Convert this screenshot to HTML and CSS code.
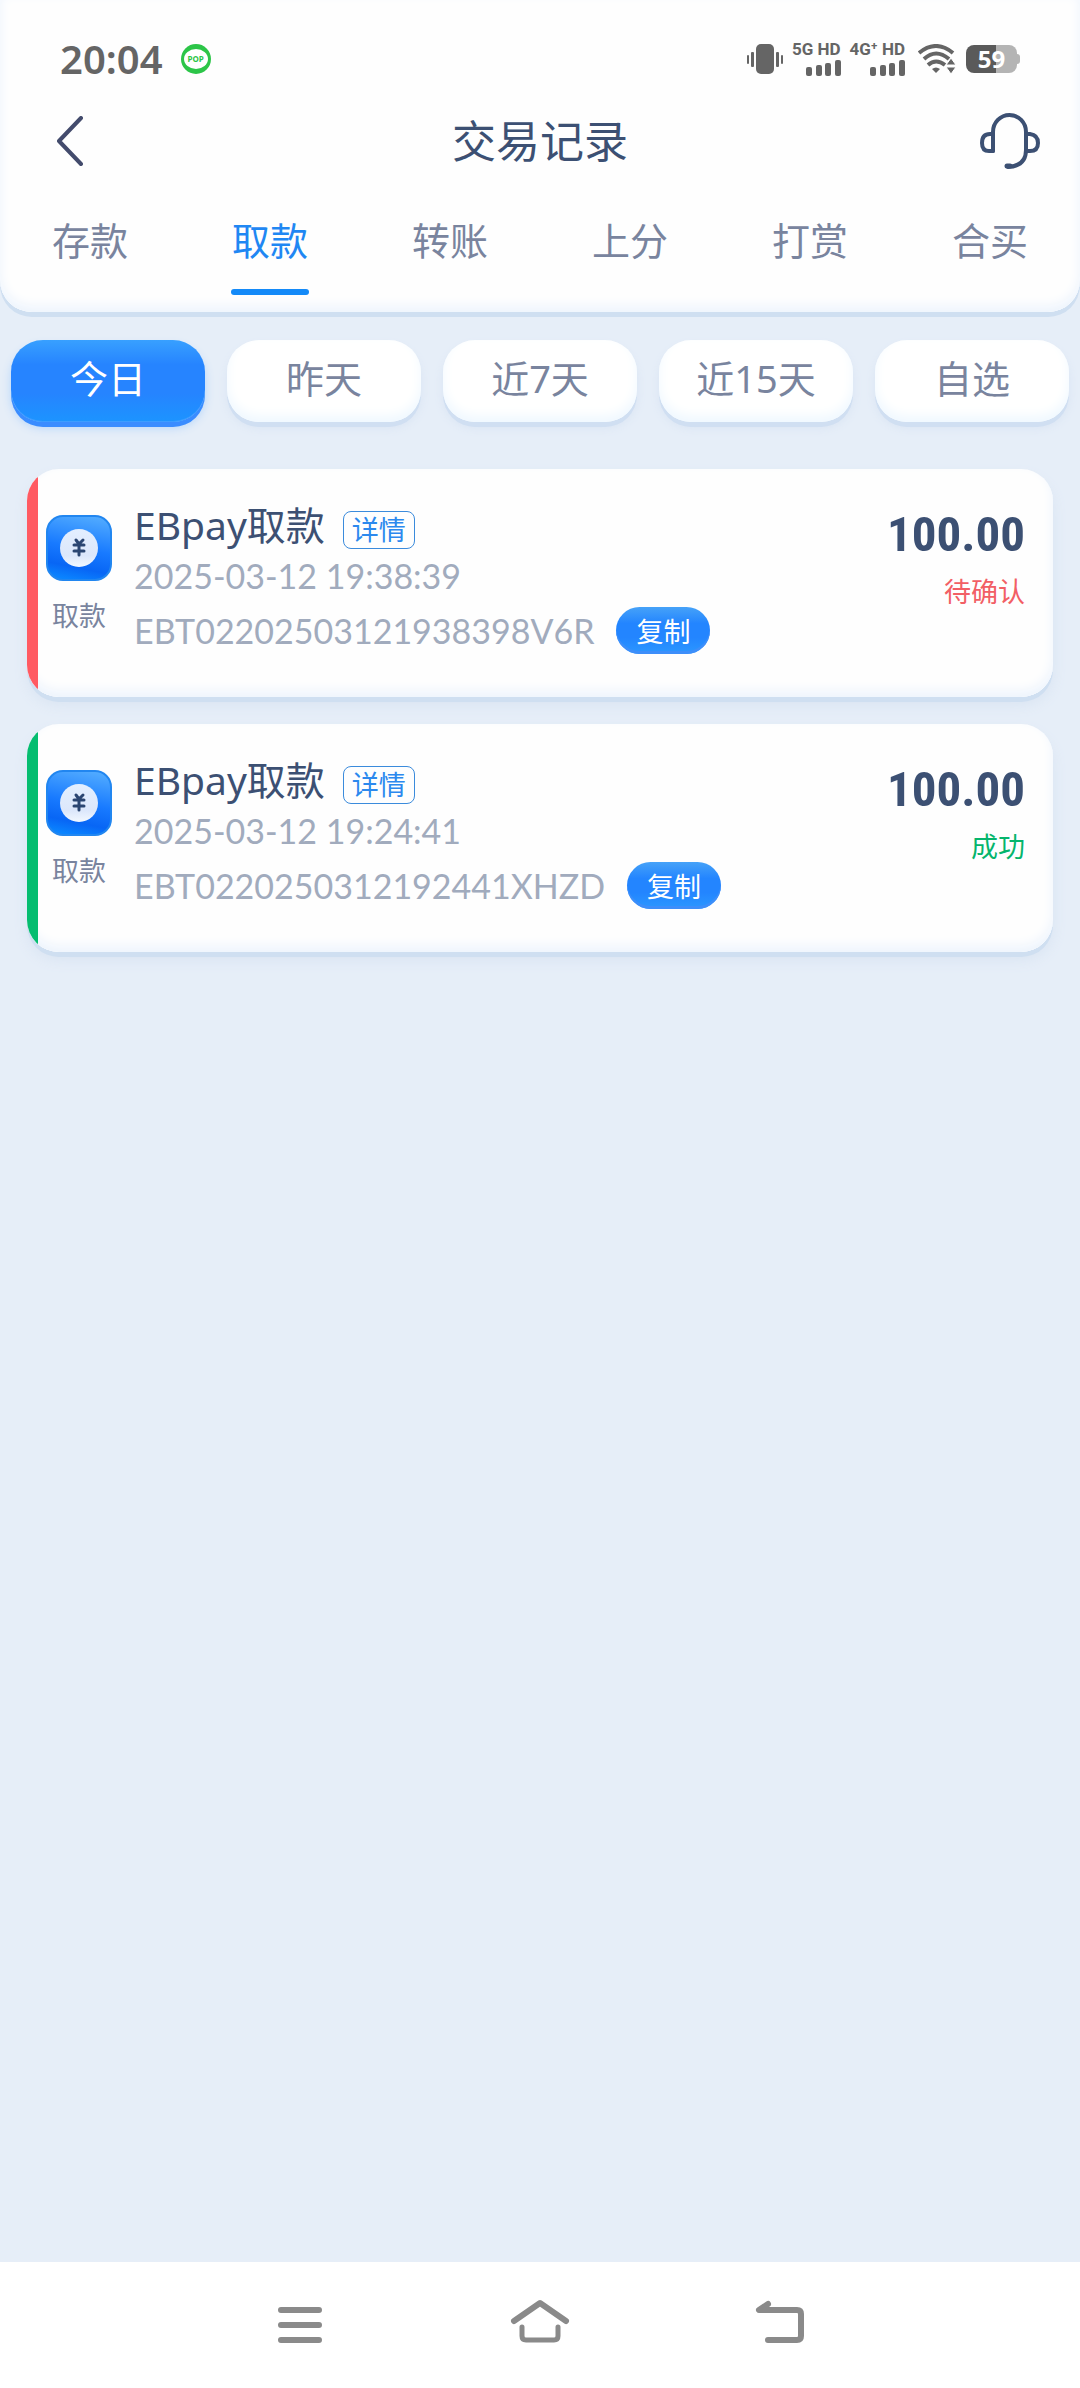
FILE: index.html
```html
<!DOCTYPE html>
<html lang="zh-CN">
<head>
  <meta charset="UTF-8">
  <meta name="viewport" content="width=device-width, initial-scale=1">
  <title>交易记录</title>
  <link rel="stylesheet" href="styles.css">
</head>
<body>
<header class="header">
  <div class="status-bar">
    <span class="time">20:04</span>
    <span class="pop-badge"><span class="pop-bubble">POP</span></span>
    <div class="status-icons">
      <svg class="vibrate" width="36" height="30" viewBox="0 0 36 30" fill="#656565">
        <rect x="9" y="0" width="18" height="30" rx="5"/>
        <rect x="0" y="11" width="2" height="9" rx="1"/>
        <rect x="4" y="8" width="3" height="15" rx="1"/>
        <rect x="29" y="8" width="3" height="15" rx="1"/>
        <rect x="34" y="11" width="2" height="9" rx="1"/>
      </svg>
      <div class="signal">
        <span>5G HD</span>
        <svg width="35" height="16" viewBox="0 0 35 16" fill="#656565">
          <rect x="0" y="7" width="6" height="9" rx="2"/>
          <rect x="10" y="5" width="6" height="11" rx="2"/>
          <rect x="19" y="3" width="6" height="13" rx="2"/>
          <rect x="29" y="0" width="6" height="16" rx="2"/>
        </svg>
      </div>
      <div class="signal">
        <span>4G⁺ HD</span>
        <svg width="35" height="16" viewBox="0 0 35 16" fill="#656565">
          <rect x="0" y="7" width="6" height="9" rx="2"/>
          <rect x="10" y="5" width="6" height="11" rx="2"/>
          <rect x="19" y="3" width="6" height="13" rx="2"/>
          <rect x="29" y="0" width="6" height="16" rx="2"/>
        </svg>
      </div>
      <svg class="wifi" width="38" height="30" viewBox="0 0 38 30">
        <g fill="none" stroke="#656565" stroke-width="4">
          <path d="M1 9Q18 -5 35 9"/>
          <path d="M6 15Q18 4 31 15"/>
          <path d="M10 21Q18 14 27 21"/>
        </g>
        <path d="M14 25Q18 22 22 25L18 29Z" fill="#656565"/>
        <path d="M33 14L38 21H28ZM33 30L28 23H38Z" fill="#656565" stroke="#fff" stroke-width="1"/>
      </svg>
      <div class="battery"><span>59</span></div>
    </div>
  </div>

  <div class="nav-bar">
    <button class="icon-btn" aria-label="返回">
      <svg width="28" height="50" viewBox="0 0 28 50" fill="none" stroke="#434b6c" stroke-width="4" stroke-linecap="round" stroke-linejoin="round">
        <path d="M25 2L3 25L25 48"/>
      </svg>
    </button>
    <h1>交易记录</h1>
    <button class="icon-btn" aria-label="客服">
      <svg width="60" height="56" viewBox="0 0 60 56" fill="none" stroke="#3c5073" stroke-width="4" stroke-linecap="round" stroke-linejoin="round">
        <path d="M13 38V19A16.500 17 0 0 1 46 19V37Q46 53 28 54"/>
        <path d="M13 21H10Q2 21 2 30Q2 38 9 38H13M46 21H50Q58 22 58 30Q58 38 50 38H46"/>
        <path d="M27 53H30" stroke-width="5"/>
      </svg>
    </button>
  </div>

  <nav class="tabs">
    <a href="#">存款</a>
    <a href="#" class="active">取款</a>
    <a href="#">转账</a>
    <a href="#">上分</a>
    <a href="#">打赏</a>
    <a href="#">合买</a>
  </nav>
</header>

<main>
  <div class="filters">
    <button class="filter active">今日</button>
    <button class="filter">昨天</button>
    <button class="filter">近7天</button>
    <button class="filter">近15天</button>
    <button class="filter">自选</button>
  </div>

  <div class="records">
    <article class="record pending">
      <div class="record-type">
        <svg width="66" height="66" viewBox="0 0 66 66">
          <defs>
            <linearGradient id="iconBg" x1="0.600" y1="0" x2="0.400" y2="1">
              <stop offset="0" stop-color="#4fa9ff"/>
              <stop offset="0.500" stop-color="#187aff"/>
              <stop offset="0.800" stop-color="#0866f5"/>
              <stop offset="1" stop-color="#0a84ff"/>
            </linearGradient>
            <linearGradient id="coin" x1="0" y1="0" x2="0" y2="1">
              <stop offset="0" stop-color="#e3efff"/>
              <stop offset="0.700" stop-color="#dce7fb"/>
              <stop offset="1" stop-color="#f2f8ff"/>
            </linearGradient>
          </defs>
          <rect x="1" y="1" width="64" height="64" rx="16" fill="url(#iconBg)" stroke="#2186f0" stroke-width="2"/>
          <circle cx="33" cy="33" r="19" fill="url(#coin)"/>
          <path d="M30 25L33 29L37 25M28 30H38M28 36H38M33 30V40" fill="none" stroke="#2b4672" stroke-width="3" stroke-linecap="round" stroke-linejoin="round"/>
        </svg>
        <span>取款</span>
      </div>
      <div class="record-info">
        <div class="record-title">
          <h2>EBpay取款</h2>
          <a href="#" class="detail">详情</a>
        </div>
        <time>2025-03-12 19:38:39</time>
        <div class="record-id">
          <span>EBT02202503121938398V6R</span>
          <button class="copy">复制</button>
        </div>
      </div>
      <div class="record-amount">
        <strong>100.00</strong>
        <span class="state">待确认</span>
      </div>
    </article>

    <article class="record success">
      <div class="record-type">
        <svg width="66" height="66" viewBox="0 0 66 66">
          <rect x="1" y="1" width="64" height="64" rx="16" fill="url(#iconBg)" stroke="#2186f0" stroke-width="2"/>
          <circle cx="33" cy="33" r="19" fill="url(#coin)"/>
          <path d="M30 25L33 29L37 25M28 30H38M28 36H38M33 30V40" fill="none" stroke="#2b4672" stroke-width="3" stroke-linecap="round" stroke-linejoin="round"/>
        </svg>
        <span>取款</span>
      </div>
      <div class="record-info">
        <div class="record-title">
          <h2>EBpay取款</h2>
          <a href="#" class="detail">详情</a>
        </div>
        <time>2025-03-12 19:24:41</time>
        <div class="record-id">
          <span>EBT0220250312192441XHZD</span>
          <button class="copy">复制</button>
        </div>
      </div>
      <div class="record-amount">
        <strong>100.00</strong>
        <span class="state">成功</span>
      </div>
    </article>
  </div>
</main>

<footer class="system-nav">
  <button aria-label="菜单">
    <svg width="60" height="44" viewBox="0 0 60 44" fill="none" stroke="#8a8a8a" stroke-width="6" stroke-linecap="round">
      <path d="M11 11H49M11 26H49M11 41H49"/>
    </svg>
  </button>
  <button aria-label="主页">
    <svg width="60" height="44" viewBox="0 0 60 44" fill="none" stroke="#8a8a8a" stroke-width="6" stroke-linecap="round" stroke-linejoin="round">
      <path d="M4 22L30 4L56 22"/>
      <path d="M12 28V37Q12 41 16 41H44Q48 41 48 37V28" stroke-width="5"/>
    </svg>
  </button>
  <button aria-label="后退">
    <svg width="60" height="44" viewBox="0 0 60 44" fill="none" stroke="#8a8a8a" stroke-width="6" stroke-linecap="round" stroke-linejoin="round">
      <path d="M18 5L9 11H47Q51 11 51 15V37Q51 41 47 41H18"/>
    </svg>
  </button>
</footer>
</body>
</html>
```

FILE: styles.css
```css
* {
  box-sizing: border-box;
}

body {
  margin: 0;
  min-height: 100vh;
  display: flex;
  flex-direction: column;
  background-color: #e6eef8;
  font-family: "Noto Sans", "Noto Sans CJK SC", sans-serif;
  font-size: 38px;
  color: #3c5073;
}

button {
  border: none;
  padding: 0;
  background: none;
  font-family: inherit;
  cursor: pointer;
}

a {
  color: inherit;
  text-decoration: none;
}

svg {
  display: block;
}

/* header */
.header {
  background-color: #fefefe;
  border-radius: 0 0 32px 32px;
  box-shadow: inset 0 -6px 12px #edf4fd, inset 0 -1px 0 #ffffff, 0 5px 0 #cfdff1;
}

.status-bar {
  display: flex;
  align-items: center;
  padding: 39px 60px 0;
  height: 79px;
  color: #656565;
}

.time {
  font-size: 40px;
  line-height: 40px;
  font-weight: 600;
}

.pop-badge {
  display: flex;
  align-items: center;
  justify-content: center;
  width: 30px;
  height: 30px;
  margin-left: 18px;
  border-radius: 50%;
  background-color: #2cc548;
}

.pop-bubble {
  width: 24px;
  height: 20px;
  border-radius: 50%;
  background-color: #ffffff;
  color: #2cc548;
  font-size: 8px;
  line-height: 20px;
  font-weight: 700;
  text-align: center;
}

.status-icons {
  display: flex;
  align-items: center;
  margin-left: auto;
}

.signal {
  display: flex;
  flex-direction: column;
  align-items: flex-end;
  gap: 3px;
  margin-left: 9px;
  font-family: Roboto, sans-serif;
  font-size: 17px;
  line-height: 15px;
  font-weight: 700;
}

.wifi {
  margin-left: 13px;
}

.battery {
  position: relative;
  width: 51px;
  height: 28px;
  margin: 0 3px 0 10px;
  border-radius: 8px;
  background: linear-gradient(90deg, #5a5a5a 59%, #b4b4b4 59%);
  color: #ffffff;
  font-size: 24px;
  line-height: 28px;
  font-weight: 700;
  text-align: center;
}

.battery::after {
  content: "";
  position: absolute;
  left: 100%;
  top: 9px;
  width: 3px;
  height: 10px;
  border-radius: 0 3px 3px 0;
  background-color: #b4b4b4;
}

.nav-bar {
  display: flex;
  align-items: center;
  justify-content: space-between;
  height: 124px;
  padding: 0 40px 0 56px;
}

.icon-btn {
  display: flex;
  width: 60px;
}

.nav-bar h1 {
  margin: 0 16px 0 0;
  font-size: 44px;
  line-height: 60px;
  font-weight: 400;
}

.tabs {
  display: grid;
  grid-template-columns: repeat(6, 1fr);
}

.tabs a {
  display: flex;
  flex-direction: column;
  align-items: center;
  gap: 29px;
  padding: 17px 0;
  line-height: 40px;
  color: #79849e;
}

.tabs a::after {
  content: "";
  width: 78px;
  height: 6px;
  border-radius: 3px;
}

.tabs a.active {
  color: #1f87f3;
}

.tabs a.active::after {
  background-color: #148af8;
}

/* filters */
main {
  flex: 1;
}

.filters {
  display: grid;
  grid-template-columns: repeat(5, 1fr);
  gap: 22px;
  padding: 28px 11px 0;
}

.filter {
  height: 82px;
  padding-bottom: 7px;
  border-radius: 32px;
  background-color: #ffffff;
  box-shadow: inset 0 -6px 12px #eff8ff, 0 5px 0 #d0dff2, 0 6px 10px #d9e4f3;
  color: #79849e;
  font-size: 38px;
  line-height: 40px;
}

.filter.active {
  background: linear-gradient(#38a0ff, #2684ff 30%, #2684ff 65%, #1c94ff);
  box-shadow: inset 0 -1px 0 #3d9cff, 0 5px 0 #3a8cff, 0 6px 10px #b5d5fa;
  color: #ffffff;
}

/* records */
.records {
  display: flex;
  flex-direction: column;
  gap: 27px;
  padding: 47px 27px;
}

.record {
  display: flex;
  align-items: flex-start;
  min-height: 228px;
  padding-right: 28px;
  border-radius: 32px;
  background-color: #fefefe;
  box-shadow: inset 0 -6px 12px #edf4fd, inset 0 -1px 0 #ffffff, 0 5px 0 #cfdff1, 0 8px 14px #d9e4f2;
  overflow: hidden;
}

.record::before {
  content: "";
  align-self: stretch;
  width: 11px;
}

.pending::before {
  background-color: #ff5a62;
}

.success::before {
  background-color: #05bd70;
}

.record-type {
  display: flex;
  flex-direction: column;
  align-items: center;
  gap: 17px;
  padding: 46px 22px 0 8px;
  color: #79849e;
  font-size: 27px;
  line-height: 36px;
}

.record-info {
  flex: 1;
  padding-top: 32px;
}

.record-title {
  display: flex;
  align-items: flex-end;
  gap: 18px;
}

.record-title h2 {
  margin: 0;
  font-size: 39px;
  line-height: 48px;
  font-weight: 400;
}

.detail {
  padding: 0 8px;
  border: 1px solid #3b8bdc;
  border-radius: 8px;
  color: #2c89ee;
  font-size: 27px;
  line-height: 36px;
}

.record-info time {
  display: block;
  font-family: Lato, sans-serif;
  font-size: 34px;
  line-height: 54px;
  color: #a1abbd;
}

.record-id {
  display: flex;
  align-items: center;
  gap: 22px;
  height: 54px;
  font-family: Lato, sans-serif;
  font-size: 34px;
  color: #a1abbd;
}

.copy {
  width: 94px;
  height: 47px;
  border-radius: 24px;
  background: linear-gradient(#46a2f8, #2385ff 35%, #2385ff 65%, #2b98ff);
  box-shadow: inset 0 -3px 0 #3d8efa;
  color: #ffffff;
  font-family: "Noto Sans", "Noto Sans CJK SC", sans-serif;
  font-size: 27px;
}

.record-amount {
  display: flex;
  flex-direction: column;
  align-items: flex-end;
  padding-top: 36px;
}

.record-amount strong {
  font-family: "Roboto Condensed", Roboto, sans-serif;
  font-size: 49px;
  line-height: 60px;
}

.state {
  margin-top: 9px;
  font-size: 27px;
  line-height: 36px;
}

.pending .state {
  color: #f25f65;
}

.success .state {
  color: #05b56c;
}

/* system navigation */
.system-nav {
  display: grid;
  grid-template-columns: repeat(3, 1fr);
  height: 126px;
  padding: 0 calc(100% / 6) 8px;
  background-color: #ffffff;
}

.system-nav button {
  display: flex;
  align-items: center;
  justify-content: center;
}
```
